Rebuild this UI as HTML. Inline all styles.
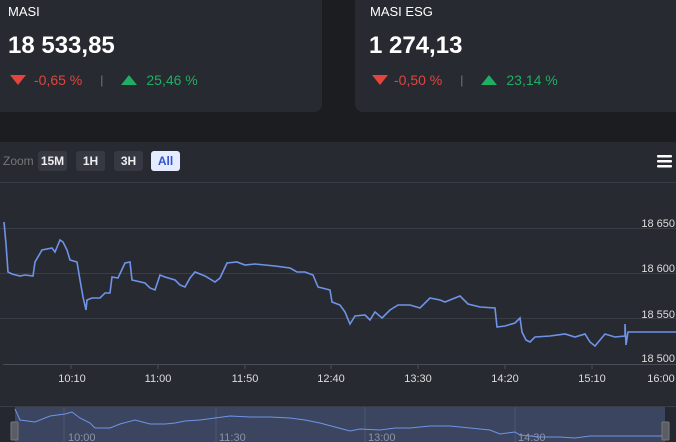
<!DOCTYPE html>
<html><head><meta charset="utf-8"><style>
*{margin:0;padding:0;box-sizing:border-box}
body{width:676px;height:442px;overflow:hidden;background:#1b1d21;font-family:"Liberation Sans",sans-serif;position:relative}
.card{position:absolute;top:0;height:112px;background:#272a31}
.c1{left:0;width:322px;border-radius:0 0 8px 0}
.c2{left:355px;width:321px;border-radius:0 0 0 8px}
.name{position:absolute;top:4px;font-size:13px;color:#fff}
.val{position:absolute;top:32px;font-size:24px;font-weight:bold;color:#fff}
.row{position:absolute;top:72px;font-size:14px;display:flex;align-items:center}
.red{color:#e5443c}.grn{color:#1fae62}
.sep{color:#777;margin:0 18px;font-size:12px}
.chart{position:absolute;left:0;top:142px;width:676px;height:300px;background:#272a31}
.btn{position:absolute;top:151px;height:20px;border-radius:3px;background:#363942;color:#eee;font-size:12px;font-weight:bold;text-align:center;line-height:20px}
</style></head><body>
<div class="card c1">
<div class="name" style="left:8px">MASI</div>
<div class="val" style="left:8px">18 533,85</div>
<div class="row" style="left:10px"><svg width="16" height="10"><path d="M0 0H16L8 10Z" fill="#e5443c"/></svg><span class="red" style="margin-left:8px">-0,65 %</span><span class="sep">|</span><svg width="16" height="10"><path d="M0 10H16L8 0Z" fill="#1fae62"/></svg><span class="grn" style="margin-left:9px">25,46 %</span></div>
</div>
<div class="card c2">
<div class="name" style="left:15px">MASI ESG</div>
<div class="val" style="left:14px">1 274,13</div>
<div class="row" style="left:17px"><svg width="16" height="10"><path d="M0 0H16L8 10Z" fill="#e5443c"/></svg><span class="red" style="margin-left:6px">-0,50 %</span><span class="sep">|</span><svg width="16" height="10"><path d="M0 10H16L8 0Z" fill="#1fae62"/></svg><span class="grn" style="margin-left:9px">23,14 %</span></div>
</div>
<div class="chart"></div>
<div style="position:absolute;left:3px;top:154px;font-size:12px;color:#777">Zoom</div>
<div class="btn" style="left:38px;width:29px">15M</div>
<div class="btn" style="left:76px;width:29px">1H</div>
<div class="btn" style="left:114px;width:29px">3H</div>
<div class="btn" style="left:151px;width:29px;background:#e6ecff;color:#3355cc">All</div>
<svg style="position:absolute;left:0;top:0" width="676" height="442">
<g fill="#fff"><rect x="657" y="155" width="15" height="2.5" rx="1"/><rect x="657" y="160" width="15" height="2.5" rx="1"/><rect x="657" y="165" width="15" height="2.5" rx="1"/></g>
<g stroke="#3a3d45" stroke-width="1"><line x1="0" y1="182.5" x2="676" y2="182.5"/><line x1="0" y1="228.5" x2="676" y2="228.5"/><line x1="0" y1="273.5" x2="676" y2="273.5"/><line x1="0" y1="318.5" x2="676" y2="318.5"/><line x1="3" y1="364.5" x2="676" y2="364.5" stroke="#4a4d55"/></g>
<g stroke="#4a4d55"><line x1="71" y1="364" x2="71" y2="369"/><line x1="158" y1="364" x2="158" y2="369"/><line x1="245" y1="364" x2="245" y2="369"/><line x1="331" y1="364" x2="331" y2="369"/><line x1="418" y1="364" x2="418" y2="369"/><line x1="505" y1="364" x2="505" y2="369"/><line x1="592" y1="364" x2="592" y2="369"/></g>
<g fill="#ddd" font-size="11" font-family="Liberation Sans" text-anchor="end"><text x="675" y="227">18 650</text><text x="675" y="272">18 600</text><text x="675" y="318">18 550</text><text x="675" y="362">18 500</text></g>
<g fill="#ddd" font-size="11" font-family="Liberation Sans" text-anchor="middle"><text x="72" y="382">10:10</text><text x="158" y="382">11:00</text><text x="245" y="382">11:50</text><text x="331" y="382">12:40</text><text x="418" y="382">13:30</text><text x="505" y="382">14:20</text><text x="592" y="382">15:10</text><text x="661" y="382">16:00</text></g>
<polyline fill="none" stroke="#6f93e8" stroke-width="1.6" points="4,222 6,244 8,272 12,274 20,276 25,275 33,276 35,262 42,250 52,248 55,252 60,240 63,242 67,250 70,260 77,262 80,280 83,297 86,310 87,300 92,298 100,298 105,293 110,293 112,277 118,278 125,263 130,262 132,280 145,283 150,288 155,290 160,275 165,277 175,280 180,285 185,287 190,278 195,272 205,276 215,282 220,278 227,263 237,262 245,265 255,264 275,266 290,268 297,272 305,272 313,275 318,287 330,290 332,302 340,305 345,312 350,324 355,316 365,315 370,320 375,312 382,318 390,310 398,305 410,305 420,308 430,298 440,300 445,302 460,296 468,304 480,307 495,308 497,327 505,326 515,323 520,318 522,332 526,340 530,342 535,337 550,336 565,334 575,337 585,334 590,342 595,346 600,340 605,334 615,337 625,336 625,324 626,345 628,332 676,332"/>
<rect x="0" y="405" width="676" height="37" fill="#252830"/>
<line x1="0" y1="406.5" x2="676" y2="406.5" stroke="#3a3d45"/>
<rect x="15" y="407" width="650" height="35" fill="#3b4560"/>
<g stroke="#4d5670"><line x1="64" y1="407" x2="64" y2="442"/><line x1="216" y1="407" x2="216" y2="442"/><line x1="365" y1="407" x2="365" y2="442"/><line x1="515" y1="407" x2="515" y2="442"/></g>
<polyline fill="none" stroke="#6f93e8" stroke-width="1" points="15,409 20,420 35,422 50,416 65,414 72,412 80,418 90,423 95,428 110,428 120,424 135,420 150,424 165,424 175,423 185,421 200,420 215,418 230,416 250,417 270,417 290,418 305,420 320,423 335,427 350,431 360,429 380,430 395,428 410,428 430,426 450,426 470,428 490,430 500,434 515,432 520,435 540,437 560,437 575,438 590,436 610,436 630,436 665,436"/>
<rect x="11" y="422" width="7" height="18" fill="#5a5d65" stroke="#777" rx="1"/>
<rect x="662" y="422" width="7" height="18" fill="#5a5d65" stroke="#777" rx="1"/>
<g fill="#8d93a5" font-size="11" font-family="Liberation Sans"><text x="68" y="441">10:00</text><text x="219" y="441">11:30</text><text x="368" y="441">13:00</text><text x="518" y="441">14:30</text></g>
</svg>
</body></html>
